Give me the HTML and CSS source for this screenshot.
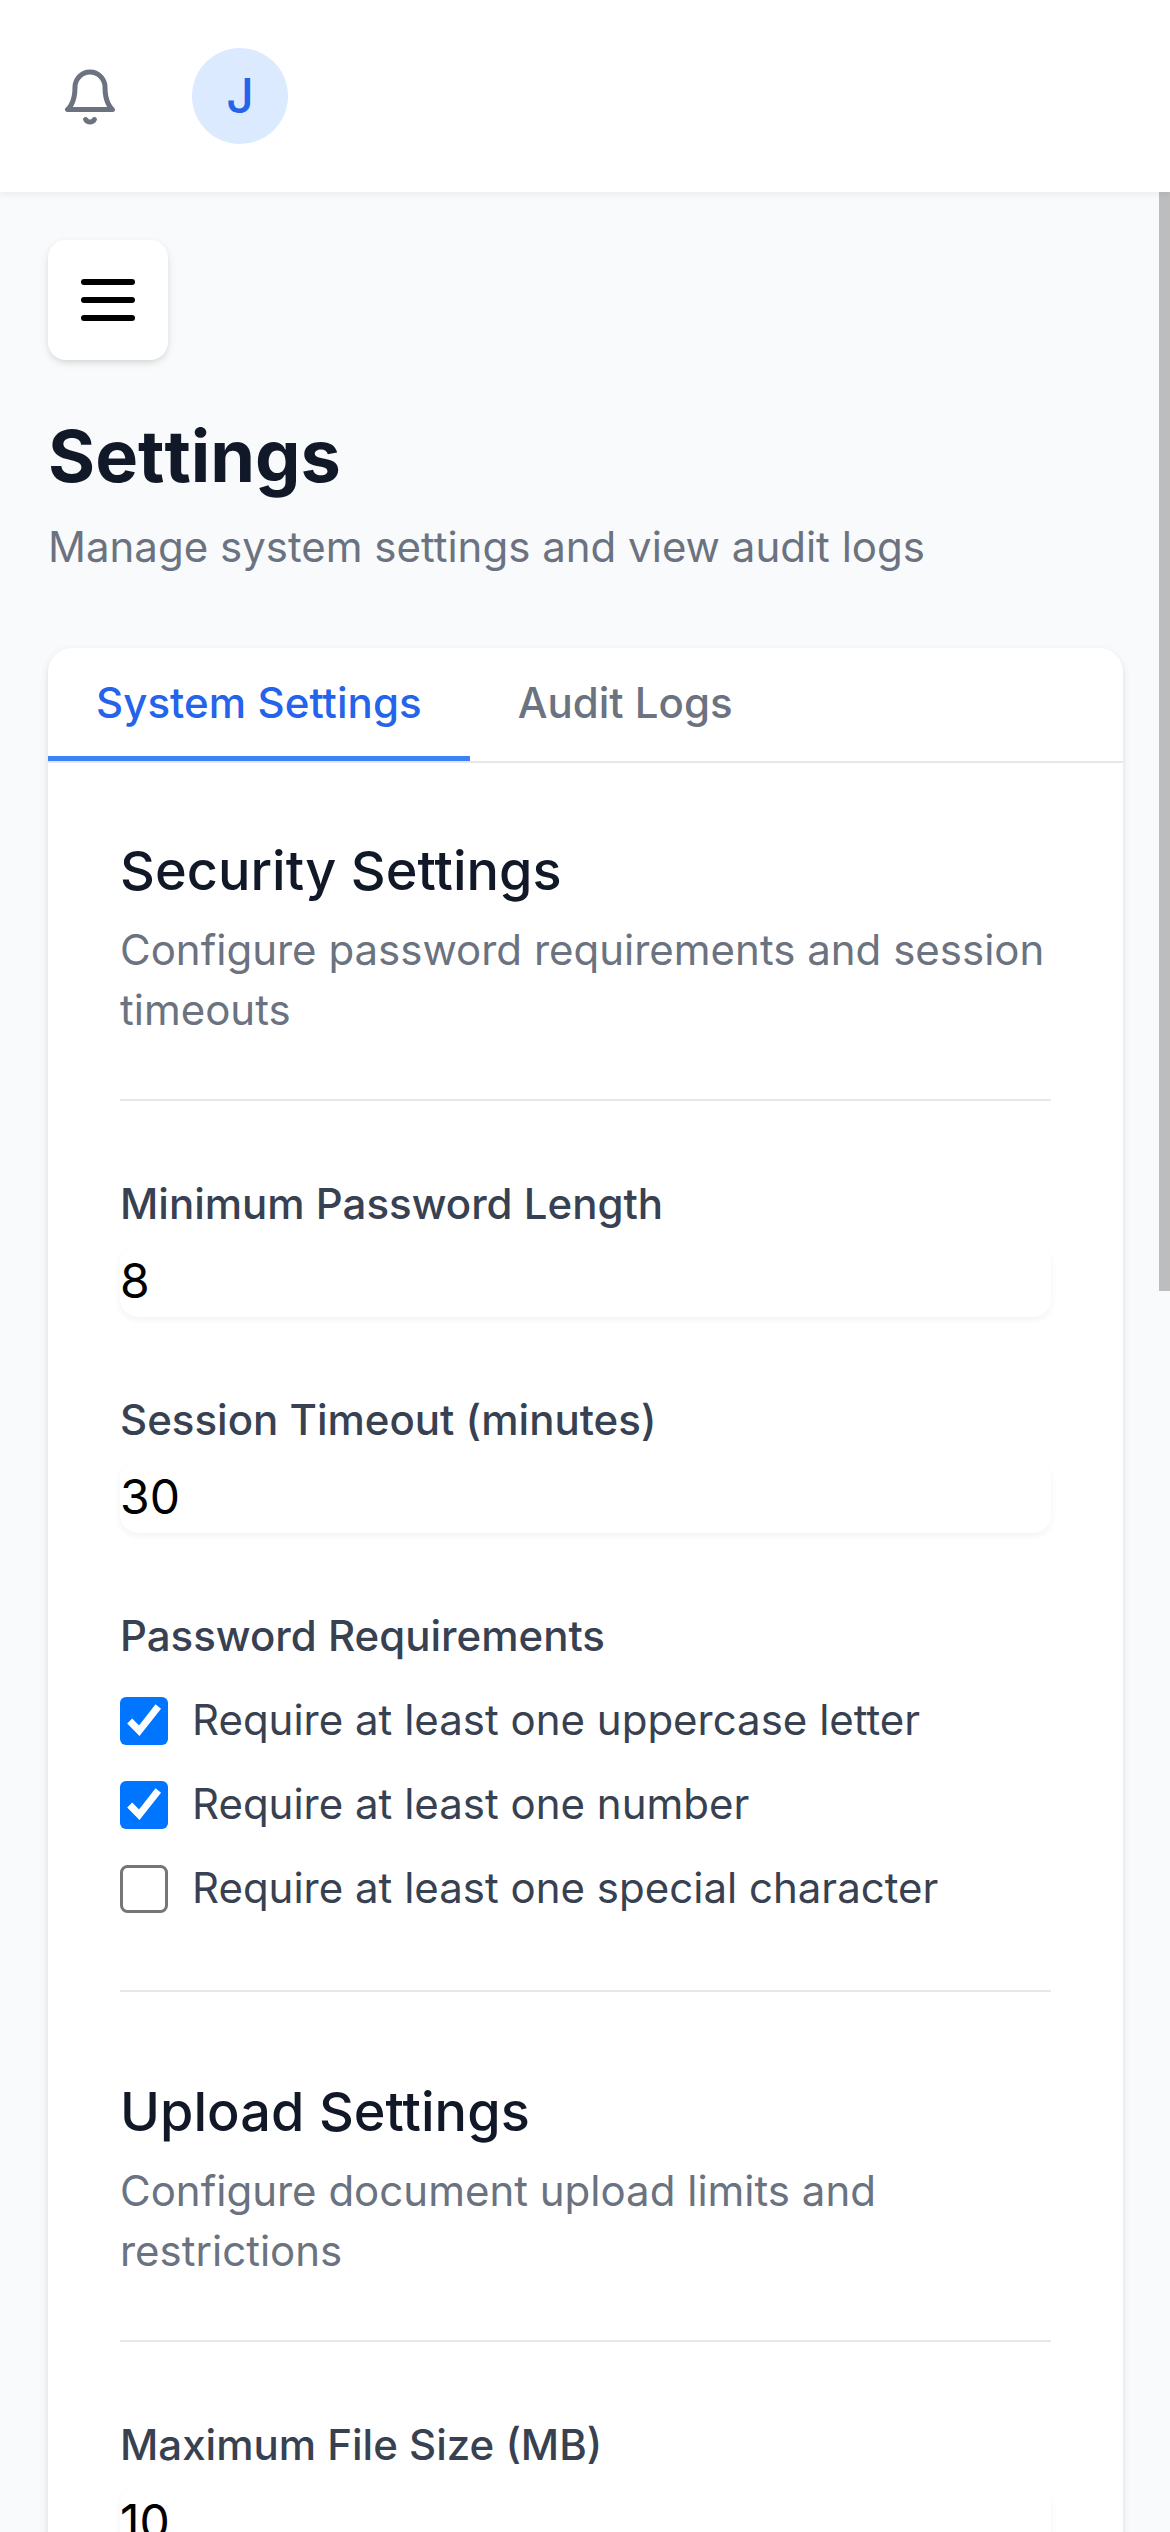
FILE: index.html
```html
<!DOCTYPE html>
<html lang="en">
<head>
<meta charset="utf-8">
<title>Settings</title>
<link rel="stylesheet" href="styles.css">
</head>
<body>
<div class="app">
  <header class="topbar">
    <button class="bell" aria-label="Notifications">
      <svg class="bell-icon" viewBox="0 0 24 24" fill="none" stroke="currentColor" stroke-width="2" stroke-linecap="round" stroke-linejoin="round"><path d="M18 8A6 6 0 0 0 6 8c0 7-3 9-3 9h18s-3-2-3-9"/><path d="M13.73 21a2 2 0 0 1-3.46 0"/></svg>
    </button>
    <div class="avatar">J</div>
  </header>
  <main class="page">
    <button class="menu" aria-label="Menu">
      <svg class="menu-icon" viewBox="0 0 24 24" fill="none" stroke="currentColor" stroke-width="2" stroke-linecap="round"><path d="M4 6h16M4 12h16M4 18h16"/></svg>
    </button>
    <h1 class="title">Settings</h1>
    <p class="subtitle">Manage system settings and view audit logs</p>
    <section class="card">
      <nav class="tabs">
        <a class="tab tab-active">System Settings</a>
        <a class="tab">Audit Logs</a>
      </nav>
      <div class="panel">
        <div class="group">
          <div class="group-head">
            <h3 class="group-title">Security Settings</h3>
            <p class="group-text">Configure password requirements and session timeouts</p>
          </div>
          <div class="field">
            <label class="label" for="len">Minimum Password Length</label>
            <input class="input" id="len" value="8">
          </div>
          <div class="field">
            <label class="label" for="timeout">Session Timeout (minutes)</label>
            <input class="input" id="timeout" value="30">
          </div>
          <div class="field">
            <div class="label">Password Requirements</div>
            <div class="checks">
              <label class="check"><svg class="box" viewBox="0 0 48 48"><rect width="48" height="48" rx="6" fill="#0075ff"/><path d="M9.7 24 19.2 33.8 38.3 9.5" fill="none" stroke="#fff" stroke-width="7"/></svg>Require at least one uppercase letter</label>
              <label class="check"><svg class="box" viewBox="0 0 48 48"><rect width="48" height="48" rx="6" fill="#0075ff"/><path d="M9.7 24 19.2 33.8 38.3 9.5" fill="none" stroke="#fff" stroke-width="7"/></svg>Require at least one number</label>
              <label class="check"><svg class="box" viewBox="0 0 48 48"><rect x="1.5" y="1.5" width="45" height="45" rx="6" fill="#fff" stroke="#767676" stroke-width="3"/></svg>Require at least one special character</label>
            </div>
          </div>
        </div>
        <div class="group group-next">
          <div class="group-head">
            <h3 class="group-title">Upload Settings</h3>
            <p class="group-text">Configure document upload limits and restrictions</p>
          </div>
          <div class="field">
            <label class="label" for="size">Maximum File Size (MB)</label>
            <input class="input" id="size" value="10">
          </div>
        </div>
      </div>
    </section>
  </main>
  <div class="scroll-thumb"></div>
</div>
</body>
</html>
```
FILE: styles.css
```css
* { box-sizing: border-box; margin: 0; padding: 0; }
body { font-family: Inter, "Liberation Sans", sans-serif; font-size: 48px; line-height: 72px; color: #000; background: #f9fafb; overflow: hidden; }
button { border: 0; font: inherit; color: inherit; background: none; }
svg { display: block; }
.app { position: relative; display: flex; flex-direction: column; height: 2532px; overflow: hidden; background: #f9fafb; }
.topbar { flex: none; display: flex; align-items: center; gap: 48px; height: 192px; padding: 0 36px; background: #fff; box-shadow: 0 3px 6px rgba(0,0,0,.05); z-index: 2; }
.bell { padding: 26px 24px 24px; color: #6b7280; }
.bell-icon { width: 60px; height: 60px; }
.avatar { display: flex; align-items: center; justify-content: center; width: 96px; height: 96px; border-radius: 50%; background: #dbeafe; color: #2563eb; font-weight: 500; }
.page { flex: none; padding: 48px 47px 0 48px; }
.menu { display: block; padding: 24px; border-radius: 18px; background: #fff; box-shadow: 0 3px 9px rgba(0,0,0,.1), 0 3px 6px -3px rgba(0,0,0,.1); }
.menu-icon { width: 72px; height: 72px; }
.title { margin-top: 48px; font-size: 72px; line-height: 96px; font-weight: 700; font-kerning: none; color: #111827; }
.subtitle { margin-top: 13px; font-size: 42px; line-height: 60px; color: #6b7280; }
.card { margin-top: 71px; background: #fff; border-radius: 24px; box-shadow: 0 3px 9px rgba(0,0,0,.1), 0 3px 6px -3px rgba(0,0,0,.1); }
.tabs { display: flex; border-bottom: 2px solid #e5e7eb; }
.tab { padding: 25px 48px 23px; border-bottom: 5px solid transparent; font-size: 42px; line-height: 60px; font-weight: 500; color: #6b7280; }
.tab-active { letter-spacing: .07px; color: #2563eb; border-color: #3b82f6; }
.panel { padding: 72px; }
.group { display: flex; flex-direction: column; gap: 72px; }
.group-next { margin-top: 72px; padding-top: 84px; border-top: 2px solid #e5e7eb; }
.group-head { padding-bottom: 59px; border-bottom: 2px solid #e5e7eb; }
.group-title { font-size: 54px; line-height: 72px; font-weight: 500; letter-spacing: .05px; color: #111827; }
.group-text { margin-top: 13px; font-size: 42px; line-height: 60px; color: #6b7280; }
.field { display: flex; flex-direction: column; }
.label { padding-top: 1px; font-size: 42px; line-height: 60px; font-weight: 500; color: #374151; }
.input { margin-top: 11px; width: 100%; height: 72px; border: 0; border-radius: 18px; background: #fff; box-shadow: 0 3px 6px rgba(0,0,0,.05); font: inherit; color: #000; }
.checks { display: flex; flex-direction: column; gap: 24px; margin-top: 24px; }
.check { display: flex; align-items: center; gap: 24px; font-size: 42px; line-height: 60px; color: #374151; }
.box { width: 48px; height: 48px; margin-top: 2px; }
.scroll-thumb { position: absolute; top: 192px; right: 0; width: 11px; height: 1099px; background: #bdbdbd; }
```
